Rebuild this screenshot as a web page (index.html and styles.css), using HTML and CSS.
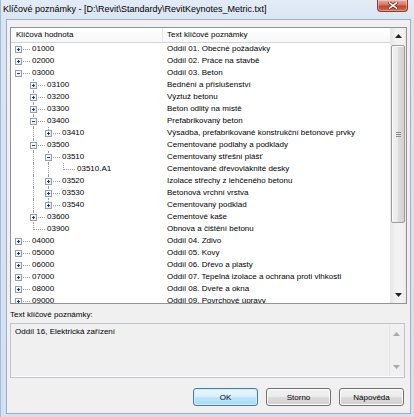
FILE: index.html
```html
<!DOCTYPE html>
<html lang="cs">
<head>
<meta charset="utf-8">
<title>Klíčové poznámky</title>
<link rel="stylesheet" href="styles.css">
</head>
<body>
<div class="window">
  <div class="titlebar">
    <div class="title">Klíčové poznámky - [D:\Revit\Standardy\RevitKeynotes_Metric.txt]</div>
    <div class="close"><svg width="10" height="7" viewBox="0 0 10 7"><path d="M1.5 0.8 L8.5 6.2 M8.5 0.8 L1.5 6.2" stroke="#5a1a10" stroke-width="3" stroke-linecap="square"/><path d="M1.5 0.8 L8.5 6.2 M8.5 0.8 L1.5 6.2" stroke="#ffffff" stroke-width="1.6" stroke-linecap="square"/></svg></div>
  </div>
  <div class="client">
    <div class="list">
      <div class="pane">
        <div class="header">
          <div class="hcell h1">Klíčová hodnota</div>
          <div class="hcell h2">Text klíčové poznámky</div>
        </div>
        <div class="body">
          <div class="row"><div class="key"><span class="ind root"><i class="box plus"></i></span><span class="k">01000</span></div><div class="txt">Oddíl 01. Obecné požadavky</div></div>
          <div class="row"><div class="key"><span class="ind root"><i class="box plus"></i></span><span class="k">02000</span></div><div class="txt">Oddíl 02. Práce na stavbě</div></div>
          <div class="row"><div class="key"><span class="ind root"><i class="box minus"></i></span><span class="k">03000</span></div><div class="txt">Oddíl 03. Beton</div></div>
          <div class="row"><div class="key"><span class="ind"></span><span class="ind tee"><i class="box plus"></i></span><span class="k">03100</span></div><div class="txt">Bednění a příslušenství</div></div>
          <div class="row"><div class="key"><span class="ind"></span><span class="ind tee"><i class="box plus"></i></span><span class="k">03200</span></div><div class="txt">Výztuž betonu</div></div>
          <div class="row"><div class="key"><span class="ind"></span><span class="ind tee"><i class="box plus"></i></span><span class="k">03300</span></div><div class="txt">Beton odlitý na místě</div></div>
          <div class="row"><div class="key"><span class="ind"></span><span class="ind tee"><i class="box minus"></i></span><span class="k">03400</span></div><div class="txt">Prefabrikovaný beton</div></div>
          <div class="row"><div class="key"><span class="ind"></span><span class="ind v"></span><span class="ind elb"><i class="box plus"></i></span><span class="k">03410</span></div><div class="txt">Výsadba, prefabrikované konstrukční betonové prvky</div></div>
          <div class="row"><div class="key"><span class="ind"></span><span class="ind tee"><i class="box minus"></i></span><span class="k">03500</span></div><div class="txt">Cementované podlahy a podklady</div></div>
          <div class="row"><div class="key"><span class="ind"></span><span class="ind v"></span><span class="ind tee"><i class="box minus"></i></span><span class="k">03510</span></div><div class="txt">Cementovaný střešní plášť</div></div>
          <div class="row"><div class="key"><span class="ind"></span><span class="ind v"></span><span class="ind v"></span><span class="ind elb"></span><span class="k">03510.A1</span></div><div class="txt">Cementované dřevovláknité desky</div></div>
          <div class="row"><div class="key"><span class="ind"></span><span class="ind v"></span><span class="ind tee"><i class="box plus"></i></span><span class="k">03520</span></div><div class="txt">Izolace střechy z lehčeného betonu</div></div>
          <div class="row"><div class="key"><span class="ind"></span><span class="ind v"></span><span class="ind tee"><i class="box plus"></i></span><span class="k">03530</span></div><div class="txt">Betonová vrchní vrstva</div></div>
          <div class="row"><div class="key"><span class="ind"></span><span class="ind v"></span><span class="ind elb"><i class="box plus"></i></span><span class="k">03540</span></div><div class="txt">Cementovaný podklad</div></div>
          <div class="row"><div class="key"><span class="ind"></span><span class="ind tee"><i class="box plus"></i></span><span class="k">03600</span></div><div class="txt">Cementové kaše</div></div>
          <div class="row"><div class="key"><span class="ind"></span><span class="ind elb"></span><span class="k">03900</span></div><div class="txt">Obnova a čištění betonu</div></div>
          <div class="row"><div class="key"><span class="ind root"><i class="box plus"></i></span><span class="k">04000</span></div><div class="txt">Oddíl 04. Zdivo</div></div>
          <div class="row"><div class="key"><span class="ind root"><i class="box plus"></i></span><span class="k">05000</span></div><div class="txt">Oddíl 05. Kovy</div></div>
          <div class="row"><div class="key"><span class="ind root"><i class="box plus"></i></span><span class="k">06000</span></div><div class="txt">Oddíl 06. Dřevo a plasty</div></div>
          <div class="row"><div class="key"><span class="ind root"><i class="box plus"></i></span><span class="k">07000</span></div><div class="txt">Oddíl 07. Tepelná izolace a ochrana proti vlhkosti</div></div>
          <div class="row"><div class="key"><span class="ind root"><i class="box plus"></i></span><span class="k">08000</span></div><div class="txt">Oddíl 08. Dveře a okna</div></div>
          <div class="row"><div class="key"><span class="ind root"><i class="box plus"></i></span><span class="k">09000</span></div><div class="txt">Oddíl 09. Povrchové úpravy</div></div>
        </div>
      </div>
      <div class="vscroll">
        <div class="sbtn"><svg width="7" height="4" viewBox="0 0 7 4"><path d="M3.5 0 L7 4 L0 4 Z" fill="#222"/></svg></div>
        <div class="track">
          <div class="thumb"><div class="grip"><i></i><i></i><i></i></div></div>
        </div>
        <div class="sbtn"><svg width="7" height="4" viewBox="0 0 7 4"><path d="M0 0 L7 0 L3.5 4 Z" fill="#222"/></svg></div>
      </div>
    </div>
    <div class="label">Text klíčové poznámky:</div>
    <div class="textbox">
      <div class="tbtext">Oddíl 16, Elektrická zařízení</div>
      <div class="tscroll">
        <svg width="7" height="4" viewBox="0 0 7 4"><path d="M3.5 0 L7 4 L0 4 Z" fill="#a9a9a9"/></svg>
        <svg width="7" height="4" viewBox="0 0 7 4"><path d="M0 0 L7 0 L3.5 4 Z" fill="#a9a9a9"/></svg>
      </div>
    </div>
    <div class="buttons">
      <button class="btn default">OK</button>
      <button class="btn">Storno</button>
      <button class="btn">Nápověda</button>
    </div>
  </div>
</div>
</body>
</html>
```

FILE: styles.css
```css
* { box-sizing: border-box; }
html, body { margin: 0; padding: 0; }
body {
  width: 414px;
  height: 417px;
  overflow: hidden;
  font-family: "Liberation Sans", Arial, sans-serif;
  font-size: 8px;
  color: #000;
  background: #d8e4f3;
}
.window {
  width: 414px;
  height: 417px;
  display: flex;
  flex-direction: column;
  background: linear-gradient(to bottom, #e3ebf6 0px, #dae5f3 20px, #d3e0f1 100%);
  border-left: 1px solid #a3bcdc;
}
.titlebar {
  height: 19px;
  display: flex;
  align-items: flex-start;
  flex: none;
}
.title {
  font-size: 9px;
  line-height: 18px;
  padding-left: 2px;
  color: #000;
  white-space: nowrap;
}
.close {
  margin-left: auto;
  margin-right: 6px;
  width: 31px;
  height: 12px;
  border: 1px solid #8d3a2c;
  border-top: none;
  border-radius: 0 0 4px 4px;
  background: linear-gradient(to bottom, #e9a99b 0%, #d47666 45%, #c0452f 55%, #cf6a4d 100%);
  display: flex;
  align-items: center;
  justify-content: center;
  box-shadow: inset 0 0 0 1px rgba(255,255,255,0.35);
}
.client {
  flex: 1;
  margin: 0 3px 3px 5px;
  border: 1px solid #a2afc0;
  background: #f0f0f0;
  padding: 7px 3px 0 3px;
  display: flex;
  flex-direction: column;
}
.list {
  height: 277px;
  flex: none;
  border: 1px solid #8f949b;
  background: #fff;
  display: flex;
}
.pane {
  flex: 1;
  display: flex;
  flex-direction: column;
  min-width: 0;
}
.header {
  height: 15px;
  flex: none;
  display: flex;
  border-bottom: 1px solid #d5d5d5;
  background: linear-gradient(to bottom, #ffffff, #f7f8f9);
}
.hcell {
  line-height: 14px;
  white-space: nowrap;
}
.h1 {
  width: 152px;
  padding-left: 5px;
  border-right: 1px solid #e3e5e8;
}
.h2 { padding-left: 4px; }
.body {
  flex: 1;
  overflow: hidden;
}
.row {
  height: 12px;
  display: flex;
  line-height: 12px;
  white-space: nowrap;
}
.key {
  width: 152px;
  display: flex;
  flex: none;
}
.txt { padding-left: 4px; }
.k { padding-left: 6px; }
.ind {
  position: relative;
  width: 15px;
  height: 12px;
  flex: none;
}
.ind.v::before,
.ind.tee::before,
.ind.elb::before {
  content: "";
  position: absolute;
  left: 7px;
  top: 0;
  height: 12px;
  border-left: 1px dotted #9c9c9c;
}
.ind.elb::before { height: 7px; }
.ind.tee::after,
.ind.elb::after,
.ind.root::after {
  content: "";
  position: absolute;
  left: 8px;
  top: 6px;
  width: 11px;
  border-top: 1px dotted #9c9c9c;
}
.box {
  position: absolute;
  left: 4px;
  top: 3px;
  width: 7px;
  height: 7px;
  border: 1px solid #94a0ae;
  background: linear-gradient(135deg, #ffffff 0%, #e6e9ee 100%);
  z-index: 1;
}
.box::before {
  content: "";
  position: absolute;
  left: 1px;
  top: 2px;
  width: 3px;
  height: 1px;
  background: #25395a;
}
.box.plus::after {
  content: "";
  position: absolute;
  left: 2px;
  top: 1px;
  width: 1px;
  height: 3px;
  background: #25395a;
}
.vscroll {
  width: 16px;
  flex: none;
  display: flex;
  flex-direction: column;
  background: linear-gradient(to right, #e6e6e6, #f2f2f2 30%, #f2f2f2 80%, #e8e8e8);
  border-left: 1px solid #eaeaea;
}
.sbtn {
  height: 16px;
  flex: none;
  display: flex;
  align-items: center;
  justify-content: center;
}
.track {
  flex: 1;
  padding-top: 1px;
}
.thumb {
  height: 178px;
  margin: 0 1px 0 0;
  border: 1px solid #9d9d9d;
  border-radius: 2px;
  background: linear-gradient(to right, #f3f3f3 0%, #eaeaea 45%, #dcdcdc 55%, #d2d2d2 100%);
  display: flex;
  align-items: center;
  justify-content: center;
  box-shadow: inset 1px 1px 0 #fbfbfb;
}
.grip {
  display: flex;
  flex-direction: column;
  gap: 1px;
}
.grip i {
  display: block;
  width: 5px;
  height: 1px;
  background: #8c8c8c;
}
.label {
  margin-top: 6px;
  line-height: 10px;
  padding-left: 0;
}
.textbox {
  margin-top: 3px;
  margin-right: 2px;
  height: 55px;
  flex: none;
  border: 1px solid #bfc4cb;
  background: #f0f0f0;
  display: flex;
  box-shadow: inset 0 -1px 0 #fbfcfd;
}
.tbtext {
  flex: 1;
  padding: 3px 0 0 4px;
  line-height: 10px;
}
.tscroll {
  width: 14px;
  flex: none;
  border-left: 1px solid #e4e4e4;
  display: flex;
  flex-direction: column;
  justify-content: space-between;
  align-items: center;
  padding: 7px 0 7px 0;
  margin: 1px 1px 1px 0;
}
.buttons {
  margin-top: 10px;
  display: flex;
  justify-content: flex-end;
  gap: 8px;
  padding-right: 3px;
}
.btn {
  width: 65px;
  height: 18px;
  padding: 0;
  font-family: "Liberation Sans", Arial, sans-serif;
  font-size: 8px;
  color: #000;
  border: 1px solid #707070;
  border-radius: 3px;
  background: linear-gradient(to bottom, #f2f2f2 0%, #ebebeb 50%, #dddddd 51%, #cfcfcf 100%);
  box-shadow: inset 0 0 0 1px #fcfcfc;
}
.btn.default {
  border-color: #3c7fb1;
  background: linear-gradient(to bottom, #eaf6fd 0%, #d9f0fc 50%, #bee6fd 51%, #a7d9f5 100%);
  box-shadow: inset 0 0 0 1px #d4ecfa;
}
```
